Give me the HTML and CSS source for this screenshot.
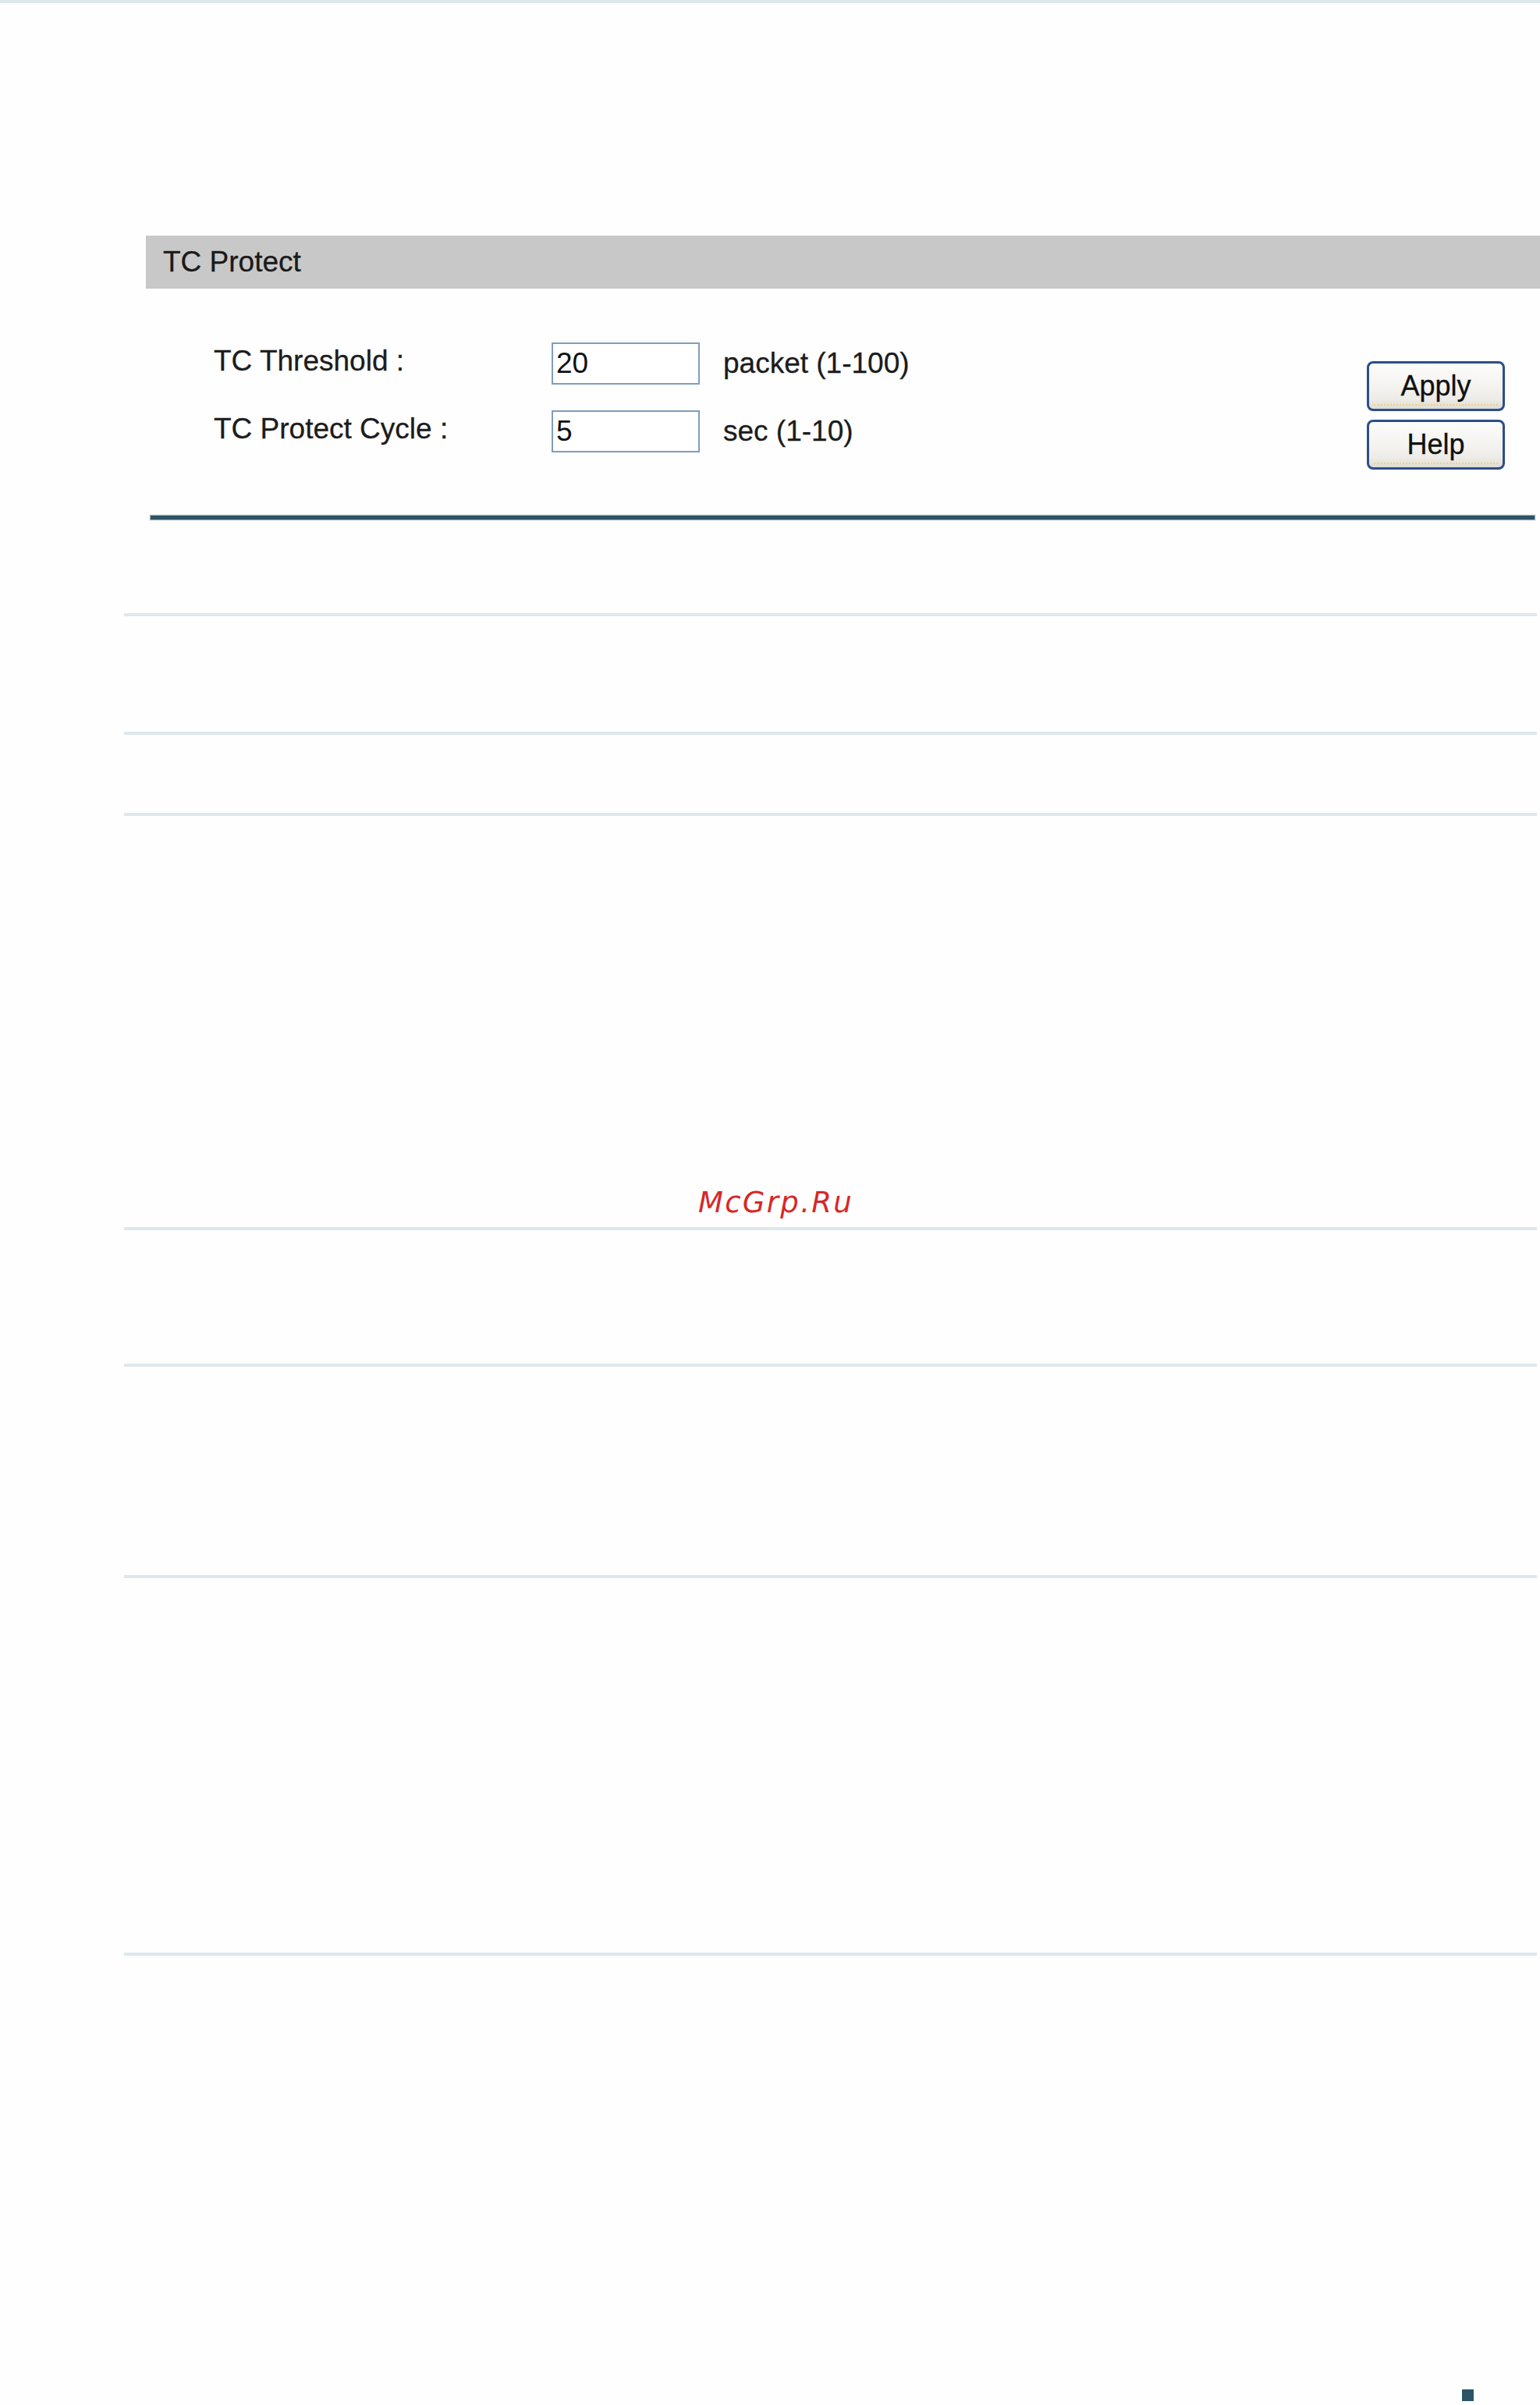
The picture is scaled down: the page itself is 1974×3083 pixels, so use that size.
FILE: index.html
```html
<!DOCTYPE html>
<html lang="en">
<head>
<meta charset="utf-8">
<title>TC Protect</title>
<link rel="stylesheet" href="styles.css">
</head>
<body>
<div class="topline"></div>

<div class="panel">
  <div class="panel-head">TC Protect</div>
  <div class="panel-body">
    <div class="fields">
      <div class="row">
        <span class="label">TC Threshold :</span>
        <input class="field" type="text" value="20">
        <span class="unit">packet (1-100)</span>
      </div>
      <div class="row">
        <span class="label">TC Protect Cycle :</span>
        <input class="field" type="text" value="5">
        <span class="unit">sec (1-10)</span>
      </div>
    </div>
    <div class="actions">
      <button class="btn" type="button">Apply</button>
      <button class="btn" type="button">Help</button>
    </div>
  </div>
  <div class="panel-rule"></div>
</div>

<div class="rules">
  <div class="band band-1"></div>
  <div class="rule"></div>
  <div class="band band-2"></div>
  <div class="rule"></div>
  <div class="band band-3"></div>
  <div class="rule"></div>
  <div class="band band-mark"><span class="watermark">McGrp.Ru</span></div>
  <div class="rule"></div>
  <div class="band band-5"></div>
  <div class="rule"></div>
  <div class="band band-6"></div>
  <div class="rule"></div>
  <div class="band band-7"></div>
  <div class="rule"></div>
</div>

<div class="corner-mark"></div>
</body>
</html>
```

FILE: styles.css
```css
html, body {
  margin: 0;
  padding: 0;
}

body {
  width: 1974px;
  height: 3083px;
  overflow: hidden;
  background: #fefefe;
  font-family: "Liberation Sans", Arial, sans-serif;
  color: #1c1c1c;
}

.topline {
  height: 4px;
  background: #dde8ec;
}

.panel {
  margin: 298px 0 0 187px;
}

.panel-head {
  height: 68px;
  line-height: 68px;
  background: #c8c8c8;
  padding-left: 22px;
  font-size: 37px;
  color: #1a1a1a;
  -webkit-text-stroke: 0.3px #1a1a1a;
}

.panel-body {
  display: flex;
  justify-content: space-between;
  align-items: flex-start;
  padding: 69px 45px 0 87px;
}

.fields {
  display: flex;
  flex-direction: column;
  gap: 33px;
}

.row {
  display: flex;
  align-items: center;
  height: 54px;
}

.label {
  width: 433px;
  font-size: 37px;
  color: #1c1c1c;
  -webkit-text-stroke: 0.3px #1c1c1c;
  position: relative;
  top: -3px;
}

.field {
  box-sizing: border-box;
  width: 190px;
  height: 54px;
  margin: 0;
  padding: 0 0 0 4px;
  border: 2px solid #7f9dbd;
  background: #fff;
  font-family: "Liberation Sans", Arial, sans-serif;
  font-size: 37px;
  color: #111;
  outline: none;
}

.unit {
  margin-left: 30px;
  font-size: 37px;
  color: #1c1c1c;
  -webkit-text-stroke: 0.3px #1c1c1c;
}

.actions {
  display: flex;
  flex-direction: column;
  gap: 11px;
  margin-top: 24px;
}

.btn {
  position: relative;
  box-sizing: border-box;
  width: 177px;
  height: 64px;
  margin: 0;
  padding: 0;
  border: 3px solid #2d4e8a;
  border-radius: 8px;
  background: linear-gradient(#fcfcfb 0%, #f3f2ef 55%, #ecebe6 80%, #dedcd4 100%);
  font-family: "Liberation Sans", Arial, sans-serif;
  font-size: 36px;
  color: #111;
  -webkit-text-stroke: 0.3px #111;
  line-height: 58px;
  text-align: center;
}

.btn::after {
  content: "";
  position: absolute;
  left: 6px;
  right: 6px;
  bottom: 4px;
  border-bottom: 2px dotted #f1d37e;
}

.panel-rule {
  height: 5px;
  margin: 59px 7px 0 6px;
  background: #2c5366;
  box-shadow: 0 0 1px 1px #9fb3bc;
}

.rules {
  margin-left: 159px;
  width: 1811px;
}

.rule {
  height: 4px;
  background: #dde8ec;
}

.band-1 { height: 120px; }
.band-2 { height: 148px; }
.band-3 { height: 100px; }
.band-5 { height: 171px; }
.band-6 { height: 267px; }
.band-7 { height: 480px; }

.band-mark {
  box-sizing: border-box;
  height: 527px;
  display: flex;
  align-items: flex-end;
  padding-left: 736px;
  padding-bottom: 13px;
}

.watermark {
  font-family: "DejaVu Sans", Verdana, sans-serif;
  font-style: italic;
  font-size: 37px;
  line-height: 37px;
  letter-spacing: 2.3px;
  color: #d62828;
}

.corner-mark {
  width: 15px;
  height: 15px;
  margin: 556px 0 0 1874px;
  background: #2b5566;
}
```
